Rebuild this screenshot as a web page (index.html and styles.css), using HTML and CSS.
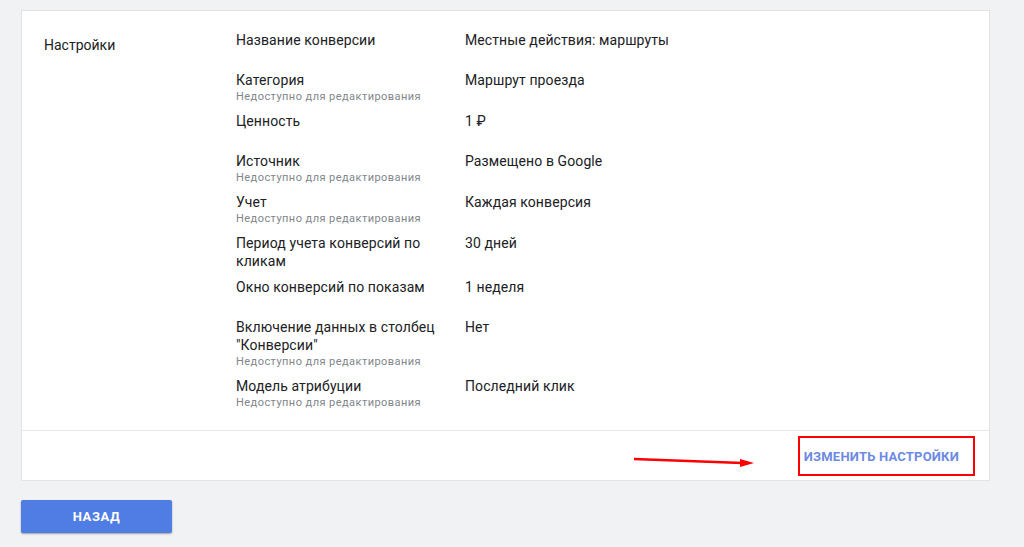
FILE: index.html
```html
<!DOCTYPE html>
<html lang="ru">

<head>
    <meta charset="UTF-8" />
    <meta name="viewport" content="width=device-width, initial-scale=1.0" />
    <title>Настройки конверсии</title>
    <link rel="stylesheet" href="styles.css">
</head>

<body>
    <div class="page">
        <div class="card">
            <div class="card-body">
                <div class="section-title">Настройки</div>
                <div class="rows">
                    <div class="row">
                        <div class="label">Название конверсии</div>
                        <div class="value">Местные действия: маршруты</div>
                    </div>
                    <div class="row">
                        <div class="label">Категория
                            <div class="sub">Недоступно для редактирования</div>
                        </div>
                        <div class="value">Маршрут проезда</div>
                    </div>
                    <div class="row">
                        <div class="label">Ценность</div>
                        <div class="value">1 ₽</div>
                    </div>
                    <div class="row">
                        <div class="label">Источник
                            <div class="sub">Недоступно для редактирования</div>
                        </div>
                        <div class="value">Размещено в Google</div>
                    </div>
                    <div class="row">
                        <div class="label">Учет
                            <div class="sub">Недоступно для редактирования</div>
                        </div>
                        <div class="value">Каждая конверсия</div>
                    </div>
                    <div class="row">
                        <div class="label">Период учета конверсий по кликам</div>
                        <div class="value">30 дней</div>
                    </div>
                    <div class="row">
                        <div class="label">Окно конверсий по показам</div>
                        <div class="value">1 неделя</div>
                    </div>
                    <div class="row">
                        <div class="label">Включение данных в столбец "Конверсии"
                            <div class="sub">Недоступно для редактирования</div>
                        </div>
                        <div class="value">Нет</div>
                    </div>
                    <div class="row">
                        <div class="label">Модель атрибуции
                            <div class="sub">Недоступно для редактирования</div>
                        </div>
                        <div class="value">Последний клик</div>
                    </div>
                </div>
            </div>
            <div class="card-footer">
                <!-- annotation arrow -->
                <svg class="arrow" width="122" height="16" viewBox="0 0 122 16">
                    <line x1="1" y1="7" x2="109" y2="11" stroke="#f00" stroke-width="2.5" />
                    <polygon points="107,7 121,11 107,15" fill="#f00" />
                </svg>
                <button class="edit-btn">Изменить настройки</button>
            </div>
        </div>
        <button class="back-btn">Назад</button>
    </div>
</body>

</html>
```

FILE: styles.css
```css
body {
    margin: 0;
    background-color: #f1f2f4;
    font-family: Roboto, "Liberation Sans", sans-serif;
    color: #202124;
}

.page {
    padding: 10px 34px 14px 21px;
}

.card {
    background-color: #fff;
    border: 1px solid #e3e3e3;
}

.card-body {
    display: flex;
    padding: 20px 0 12px 22px;
}

.section-title {
    width: 192px;
    font-size: 14px;
    line-height: 18px;
    padding-top: 5px;
}

.rows {
    flex: 1;
}

.row {
    display: flex;
    min-height: 32px;
    padding-bottom: 8px;
    font-size: 14px;
    line-height: 18px;
    letter-spacing: 0.1px;
}

.label {
    width: 215px;
    margin-right: 14px;
}

.sub {
    font-size: 11px;
    line-height: 15px;
    color: #80868b;
    letter-spacing: 0.45px;
}

.card-footer {
    position: relative;
    display: flex;
    justify-content: flex-end;
    border-top: 1px solid #e8e8e8;
    padding: 5px 14px 4px 0;
}

.arrow {
    position: absolute;
    left: 611px;
    top: 21px;
}

.edit-btn {
    height: 40px;
    background: #fff;
    border: 2px solid #f00;
    padding: 0 14px 0 4px;
    color: #6d8ae3;
    font-family: Roboto, "Liberation Sans", sans-serif;
    font-size: 13px;
    font-weight: bold;
    text-transform: uppercase;
    letter-spacing: 0.2px;
}

.back-btn {
    display: block;
    margin-top: 19px;
    width: 151px;
    height: 33px;
    background-color: #4f7de3;
    border: none;
    border-radius: 2px;
    box-shadow: 0 1px 2px rgba(0, 0, 0, 0.35);
    color: #fff;
    font-family: Roboto, "Liberation Sans", sans-serif;
    font-size: 13px;
    font-weight: bold;
    text-transform: uppercase;
    letter-spacing: 0.6px;
}
```
